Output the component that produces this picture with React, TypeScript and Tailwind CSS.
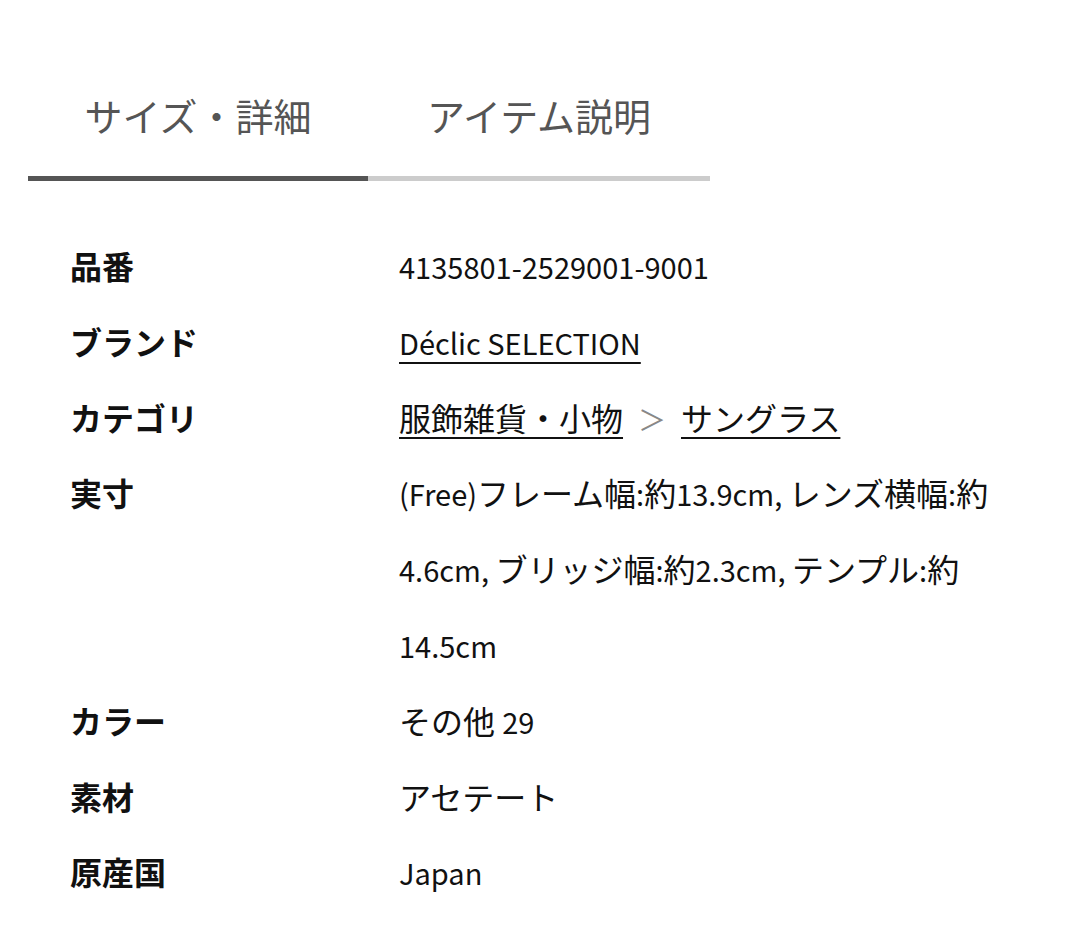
import React from "react";

const font = { fontFamily: '"Noto Sans CJK JP", "Noto Sans", sans-serif' };

// Latin runs in the values are set a touch smaller than the Japanese
function L({ children }: { children: React.ReactNode }) {
  return <span className="text-[29px] leading-none">{children}</span>;
}

function Row({ label, children }: { label: string; children: React.ReactNode }) {
  return (
    <div className="grid grid-cols-[329px_1fr]">
      <div className="font-bold text-[#111]">{label}</div>
      <div className="text-[#111]">{children}</div>
    </div>
  );
}

export default function App() {
  return (
    <main className="h-[933px] overflow-hidden bg-white" style={font}>
      <div className="px-[28px] pt-[60px]">
        {/* Tabs */}
        <div className="flex w-[682px]">
          <div className="flex h-[121px] w-[340px] items-center justify-center border-b-[5px] border-[#555] pb-[8px] text-[38px] text-[#555]">
            サイズ・詳細
          </div>
          <div className="flex h-[121px] w-[342px] items-center justify-center border-b-[5px] border-[#ccc] pb-[8px] text-[38px] text-[#555]">
            アイテム説明
          </div>
        </div>

        {/* Details */}
        <div className="mt-[47px] pl-[42px] pr-[12px] text-[32px] leading-[75.8px]">
          <Row label="品番">
            <L>4135801-2529001-9001</L>
          </Row>
          <Row label="ブランド">
            <L>
              <span className="underline decoration-2 underline-offset-[7px]">Déclic SELECTION</span>
            </L>
          </Row>
          <Row label="カテゴリ">
            <span className="underline decoration-2 underline-offset-[6px]">服飾雑貨・小物</span>
            <span className="inline-block w-[58px] text-center text-[28px] leading-none text-[#888]">＞</span>
            <span className="underline decoration-2 underline-offset-[6px]">サングラス</span>
          </Row>
          <Row label="実寸">
            <L>(Free)</L>フレーム幅<L>:</L>約<L>13.9cm, </L>レンズ横幅<L>:</L>約<L>4.6cm, </L>ブリッジ幅<L>:</L>約
            <L>2.3cm, </L>テンプル<L>:</L>約<L>14.5cm</L>
          </Row>
          <Row label="カラー">
            その他 <L>29</L>
          </Row>
          <Row label="素材">アセテート</Row>
          <Row label="原産国">
            <L>Japan</L>
          </Row>
          <Row label="ショップ">
            <L>Déclic</L>
          </Row>
        </div>
      </div>
    </main>
  );
}
